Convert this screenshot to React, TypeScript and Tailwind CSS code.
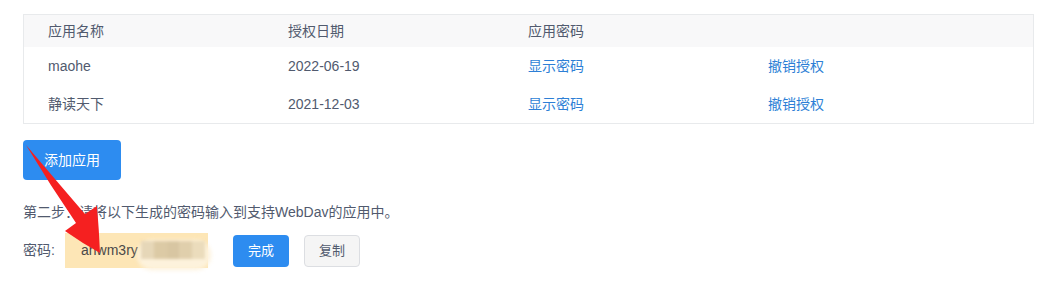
import React from 'react';

const rows = [
  { name: 'maohe', date: '2022-06-19' },
  { name: '静读天下', date: '2021-12-03' },
];

function Arrow() {
  return (
    <svg
      className="absolute left-0 top-0 pointer-events-none"
      width="1038"
      height="293"
      viewBox="0 0 1038 293"
    >
      <path
        d="M26 145 Q60 185 85 214 L97 206 Q99 230 100 253 Q82 243 65 231 L76 223 Q50 185 26 145 Z"
        fill="#f52020"
      />
    </svg>
  );
}

export default function App() {
  return (
    <div
      className="relative w-[1038px] h-[293px] bg-white pt-[14px] pl-[23px] text-[14px] text-[#515a6e] overflow-hidden"
      style={{ fontFamily: '"Liberation Sans", "Noto Sans CJK SC", sans-serif' }}
    >
      <div className="w-[1011px] border border-[#e8eaec]">
        <div className="grid grid-cols-[240px_240px_240px_1fr] h-[32px] items-center bg-[#f8f8f9]">
          <div className="pl-[24px]">应用名称</div>
          <div className="pl-[24px]">授权日期</div>
          <div className="pl-[24px]">应用密码</div>
          <div />
        </div>
        {rows.map((r) => (
          <div
            key={r.name}
            className="grid grid-cols-[240px_240px_240px_1fr] h-[38px] items-center"
          >
            <div className="pl-[24px]">{r.name}</div>
            <div className="pl-[24px]">{r.date}</div>
            <div className="pl-[24px] text-[#2d7fd6]">显示密码</div>
            <div className="pl-[24px] text-[#2d7fd6]">撤销授权</div>
          </div>
        ))}
      </div>

      <button className="mt-[16px] w-[98px] h-[40px] rounded-[4px] bg-[#2d8cf0] text-white text-[14px]">
        添加应用
      </button>

      <div className="mt-[22px] leading-[20px]">
        第二步：请将以下生成的密码输入到支持WebDav的应用中。
      </div>

      <div className="mt-[11px] flex items-center h-[35px]">
        <span className="w-[42px]">密码:</span>
        <div className="relative w-[143px] h-[35px] bg-[#fde6b6] flex items-center pl-[16px] text-[#4a4a4a]">
          anwm3ry
          <div className="absolute left-[72px] top-[7px] w-[74px] h-[30px] rounded-full bg-[#fdf2dc] blur-[2px]" />
          <div className="absolute left-[76px] top-[8px] w-[64px] h-[18px] grid grid-cols-5 blur-[1.5px]">
            <div className="bg-[#e6d7b8]" />
            <div className="bg-[#dccaa5]" />
            <div className="bg-[#d8c6a2]" />
            <div className="bg-[#e0cfac]" />
            <div className="bg-[#ebdcbc]" />
          </div>
        </div>
        <button className="ml-[25px] w-[56px] h-[32px] rounded-[4px] bg-[#2d8cf0] text-white text-[13px]">
          完成
        </button>
        <button className="ml-[15px] w-[56px] h-[32px] rounded-[4px] bg-[#f5f5f5] border border-[#dcdee2] text-[#515a6e] text-[13px]">
          复制
        </button>
      </div>

      <Arrow />
    </div>
  );
}
